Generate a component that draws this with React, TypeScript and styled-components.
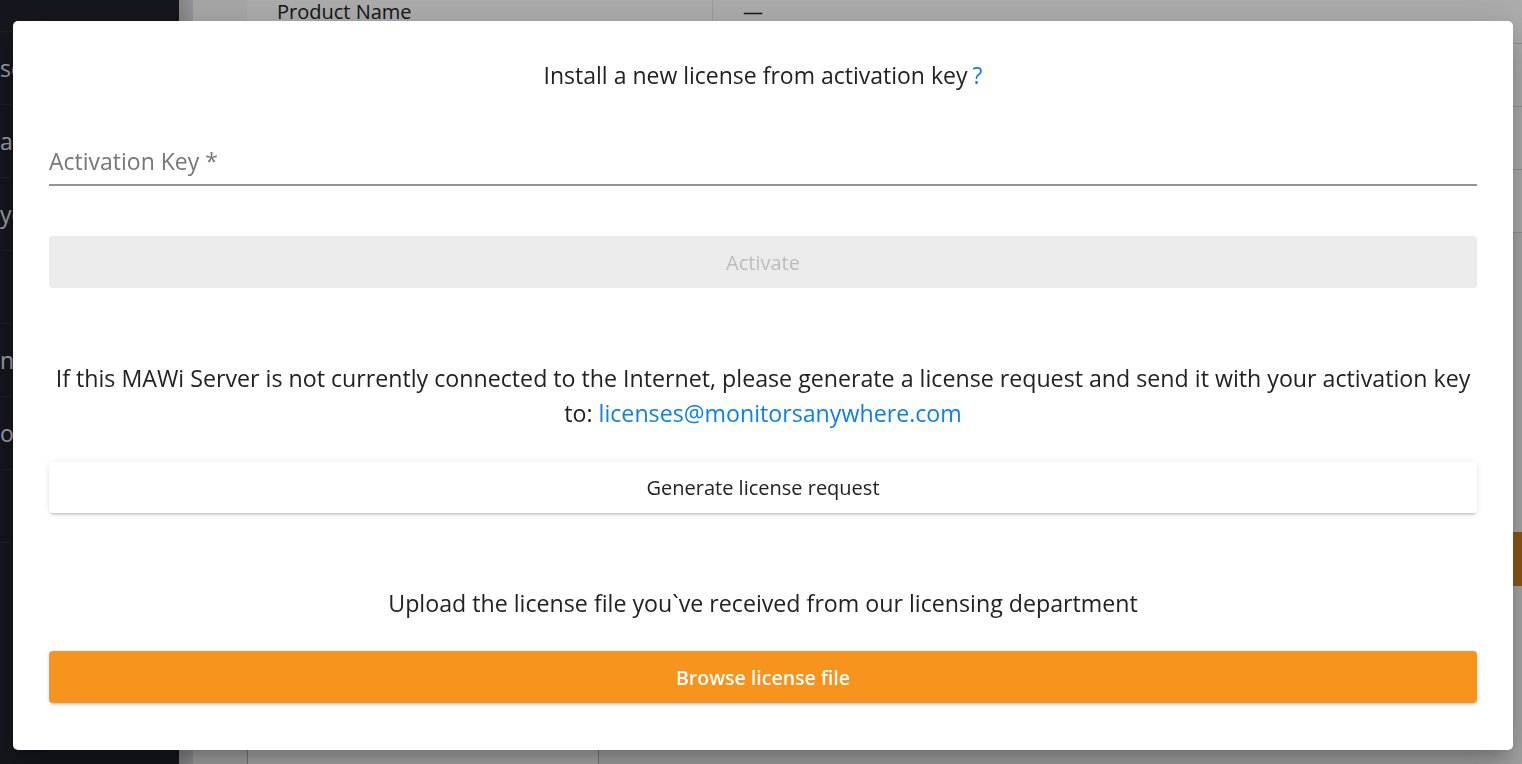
import styled, { createGlobalStyle } from "styled-components";

const GlobalStyle = createGlobalStyle`
  html, body {
    margin: 0;
    padding: 0;
    height: 100%;
    overflow: hidden;
  }
  body {
    font-family: "Open Sans", "Noto Sans", sans-serif;
  }
  #root {
    height: 100%;
  }
`;

const sideItems = ["scans", "audit", "yearly", "", "nodes", "ordering", ""];
const rows = ["", "", ""];

export default function App() {
  return (
    <>
      <GlobalStyle />
      <Page>
        <SideBar>
          <SideTop />
          {sideItems.map((label, i) => (
            <SideItem key={i}>{label}</SideItem>
          ))}
        </SideBar>
        <Divider />
        <Main>
          <Card>
            <HeaderRow>
              <HeadCell>Product Name</HeadCell>
              <HeadCell $narrow>—</HeadCell>
            </HeaderRow>
            {rows.map((_, i) => (
              <Row key={i} />
            ))}
          </Card>
          <Actions>
            <BackButton>Save</BackButton>
          </Actions>
          <BackInput />
        </Main>
      </Page>

      <Overlay>
        <Dialog>
          <Title>
            Install a new license from activation key<Help>?</Help>
          </Title>

          <Field>
            <FieldLabel>Activation Key *</FieldLabel>
          </Field>

          <FlatButton disabled>Activate</FlatButton>

          <Paragraph $gap={73}>
            If this MAWi Server is not currently connected to the Internet,
            please generate a license request and send it with your activation
            key to: <Link href="#">licenses@monitorsanywhere.com</Link>
          </Paragraph>

          <RaisedButton>Generate license request</RaisedButton>

          <Paragraph $gap={73}>
            Upload the license file you`ve received from our licensing
            department
          </Paragraph>

          <PrimaryButton>Browse license file</PrimaryButton>
        </Dialog>
      </Overlay>
    </>
  );
}

const Page = styled.div`
  display: flex;
  height: 100vh;
  overflow: hidden;
  background-color: #f7f7f7;
`;

const SideBar = styled.div`
  width: 179px;
  background-color: #1f222c;
  display: flex;
  flex-direction: column;
  overflow: hidden;
`;

const SideTop = styled.div`
  height: 31px;
  flex: none;
  border-bottom: 1px solid #2c303b;
`;

const SideItem = styled.div`
  height: 72px;
  flex: none;
  display: flex;
  align-items: center;
  border-bottom: 1px solid #2c303b;
  color: #eceef3;
  font-size: 23px;
  white-space: nowrap;
`;

const Divider = styled.div`
  width: 14px;
  background: linear-gradient(to right, #c4c5c8, #dcdcde);
`;

const Main = styled.div`
  flex: 1;
  padding: 0 0 0 54px;
  display: flex;
  flex-direction: column;
  overflow: hidden;
`;

const Card = styled.div`
  background-color: #ffffff;
`;

const HeaderRow = styled.div`
  display: flex;
  height: 43px;
  border-bottom: 1px solid #d6d6d6;
`;

const HeadCell = styled.div<{ $narrow?: boolean }>`
  width: ${({ $narrow }) => ($narrow ? "auto" : "405px")};
  flex: ${({ $narrow }) => ($narrow ? "1" : "none")};
  padding: 0 30px;
  color: #222;
  font-size: 20px;
  line-height: 24px;
  border-right: ${({ $narrow }) => ($narrow ? "none" : "1px solid #e6e6e6")};
`;

const Row = styled.div`
  height: 62px;
  border-bottom: 1px solid #d6d6d6;
`;

const Actions = styled.div`
  display: flex;
  justify-content: flex-end;
  padding-top: 299px;
`;

const BackButton = styled.div`
  width: 60px;
  height: 54px;
  background-color: #d3811f;
  border-radius: 4px 0 0 4px;
  color: transparent;
`;

const BackInput = styled.div`
  flex: none;
  margin-top: 155px;
  width: 350px;
  height: 40px;
  border: 1px solid #b4b4b4;
  border-radius: 6px;
  background: #fff;
`;

const Overlay = styled.div`
  position: fixed;
  inset: 0;
  background-color: rgba(0, 0, 0, 0.32);
  display: flex;
  align-items: flex-start;
  justify-content: center;
  padding-top: 21px;
`;

const Dialog = styled.div`
  width: 1500px;
  box-sizing: border-box;
  margin-left: 4px;
  background-color: #ffffff;
  border-radius: 5px;
  padding: 36px 36px 47px;
  display: flex;
  flex-direction: column;
  box-shadow: 0 11px 15px -7px rgba(0, 0, 0, 0.2),
    0 24px 38px 3px rgba(0, 0, 0, 0.14), 0 9px 46px 8px rgba(0, 0, 0, 0.12);
`;

const Title = styled.div`
  text-align: center;
  font-size: 23px;
  line-height: 36px;
  color: #222222;
`;

const Help = styled.span`
  color: #0b80f0;
  margin-left: 5px;
`;

const Field = styled.div`
  margin-top: 53px;
  padding-bottom: 8px;
  border-bottom: 2px solid #949494;
`;

const FieldLabel = styled.div`
  font-size: 23px;
  line-height: 30px;
  color: #777777;
`;

const ButtonBase = styled.button`
  display: block;
  width: 100%;
  border: none;
  border-radius: 4px;
  font-family: "Open Sans", "Noto Sans", sans-serif;
  font-size: 20px;
  cursor: pointer;
`;

const FlatButton = styled(ButtonBase)`
  margin-top: 50px;
  height: 52px;
  background-color: #ebebeb;
  color: #bcbcbc;
  cursor: default;
`;

const Paragraph = styled.p<{ $gap?: number }>`
  margin: ${({ $gap }) => $gap ?? 72}px 0 0;
  text-align: center;
  font-size: 23.2px;
  line-height: 35px;
  color: #222222;
`;

const Link = styled.a`
  color: #0b80f0;
  text-decoration: none;
`;

const RaisedButton = styled(ButtonBase)`
  margin-top: 31px;
  height: 51px;
  background-color: #ffffff;
  color: #222222;
  box-shadow: 0 3px 3px -2px rgba(0, 0, 0, 0.25),
    0 1px 6px 0 rgba(0, 0, 0, 0.1);
`;

const PrimaryButton = styled(ButtonBase)`
  margin-top: 30px;
  height: 52px;
  background-color: #f7941d;
  color: #ffffff;
  font-size: 19.5px;
  font-weight: 600;
  box-shadow: 0 3px 3px -2px rgba(0, 0, 0, 0.2),
    0 1px 5px 0 rgba(0, 0, 0, 0.1);
`;
